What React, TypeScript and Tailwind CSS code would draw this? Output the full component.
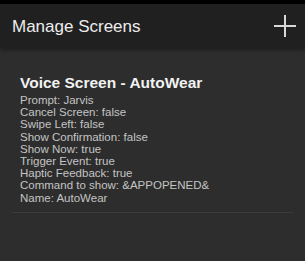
const details = [
  "Prompt: Jarvis",
  "Cancel Screen: false",
  "Swipe Left: false",
  "Show Confirmation: false",
  "Show Now: true",
  "Trigger Event: true",
  "Haptic Feedback: true",
  "Command to show: &APPOPENED&",
  "Name: AutoWear",
];

export default function App() {
  return (
    <div className="w-[305px] h-[261px] bg-[#2d2d2d] font-['Liberation_Sans',Arial,sans-serif] overflow-hidden">
      <div className="h-[4px] bg-black" />
      <div className="h-[44px] bg-[#202020] flex items-center justify-between pl-3 pr-[9px] shadow-[0_2px_4px_rgba(0,0,0,0.35)]">
        <span className="text-[17px] text-[#ededed] leading-none">Manage Screens</span>
        <svg width="22" height="22" viewBox="0 0 22 22" className="text-[#d8d8d8]">
          <path d="M11 0v22M0 11h22" stroke="currentColor" strokeWidth="2" />
        </svg>
      </div>
      <div className="pt-[26px] px-3">
        <div className="px-2">
          <div className="text-[15.5px] font-bold text-[#f2f2f2] leading-[18px]">
            Voice Screen - AutoWear
          </div>
          <div className="mt-[2px] text-[11.5px] leading-[12.2px] text-[#c4c4c4]">
            {details.map((d) => (
              <div key={d}>{d}</div>
            ))}
          </div>
        </div>
        <div className="mt-[8px] h-px bg-[#3c3c3c]" />
      </div>
    </div>
  );
}
